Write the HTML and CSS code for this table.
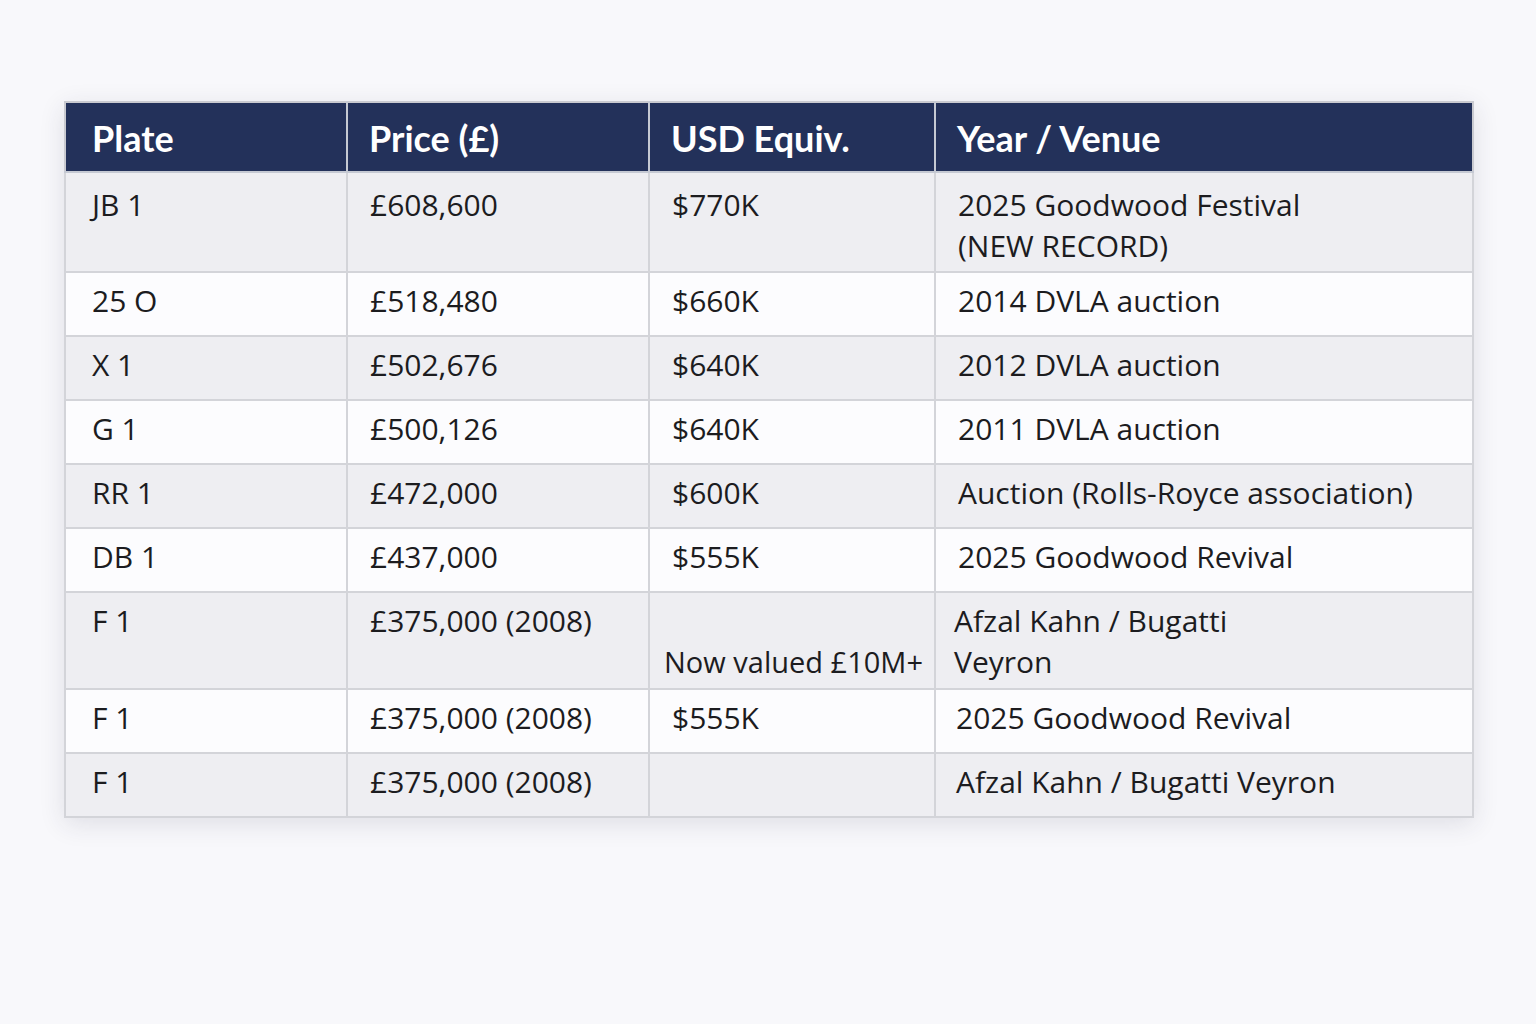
FILE: index.html
```html
<!DOCTYPE html>
<html>
<head>
<meta charset="utf-8">
<link rel="stylesheet" href="styles.css">
</head>
<body>
<div class="page">
<table class="plates">
  <colgroup>
    <col class="c1"><col class="c2"><col class="c3"><col class="c4">
  </colgroup>
  <thead>
    <tr><th>Plate</th><th>Price (£)</th><th>USD Equiv.</th><th>Year / Venue</th></tr>
  </thead>
  <tbody>
    <tr class="alt two"><td>JB 1</td><td>£608,600</td><td>$770K</td><td>2025 Goodwood Festival<br>(NEW RECORD)</td></tr>
    <tr><td>25 O</td><td>£518,480</td><td>$660K</td><td>2014 DVLA auction</td></tr>
    <tr class="alt"><td>X 1</td><td>£502,676</td><td>$640K</td><td>2012 DVLA auction</td></tr>
    <tr><td>G 1</td><td>£500,126</td><td>$640K</td><td>2011 DVLA auction</td></tr>
    <tr class="alt"><td>RR 1</td><td>£472,000</td><td>$600K</td><td>Auction (Rolls-Royce association)</td></tr>
    <tr><td>DB 1</td><td>£437,000</td><td>$555K</td><td>2025 Goodwood Revival</td></tr>
    <tr class="alt tall"><td>F 1</td><td>£375,000 (2008)</td><td class="bottom">Now valued £10M+</td><td class="shift">Afzal Kahn / Bugatti<br>Veyron</td></tr>
    <tr><td>F 1</td><td>£375,000 (2008)</td><td>$555K</td><td class="shift1">2025 Goodwood Revival</td></tr>
    <tr class="alt"><td>F 1</td><td>£375,000 (2008)</td><td></td><td class="shift1">Afzal Kahn / Bugatti Veyron</td></tr>
  </tbody>
</table>
</div>
</body>
</html>
```

FILE: styles.css
```css
html, body {
  margin: 0;
  padding: 0;
}
body {
  width: 1536px;
  height: 1024px;
  background: #f8f8fb;
  font-family: "Open Sans", "Liberation Sans", sans-serif;
  color: #1c1c1f;
  overflow: hidden;
}
.page {
  padding: 101px 0 0 64px;
}
.plates {
  border-collapse: collapse;
  width: 1408px;
  table-layout: fixed;
  border: 2px solid #c9cad0;
  box-shadow: 0 6px 24px rgba(40, 45, 70, 0.12);
}
.c1 { width: 282px; }
.c2 { width: 302px; }
.c3 { width: 286px; }
.c4 { width: 538px; }

th {
  font-family: Lato, "Liberation Sans", sans-serif;
  background: #23315a;
  color: #ffffff;
  font-weight: 700;
  font-size: 36px;
  text-align: left;
  height: 70px;
  padding: 2px 0 0 21px;
  box-sizing: border-box;
  border-left: 2px solid #c5c9d3;
  border-bottom: 2px solid #c5c9d3;
  line-height: 36px;
}
th:first-child {
  border-left: none;
  padding-left: 26px;
}
td {
  font-size: 30px;
  line-height: 41px;
  vertical-align: top;
  padding: 7px 0 14px 22px;
  border: 2px solid #d3d4d9;
  background: #fcfcfe;
  white-space: nowrap;
}
td:first-child {
  padding-left: 26px;
}
tr.alt td {
  background: #eeeef2;
}
tr.two td {
  padding-top: 11px;
  padding-bottom: 5px;
}
tr.tall td {
  padding-top: 7px;
  padding-bottom: 6px;
}
td.bottom {
  font-size: 29px;
  vertical-align: bottom;
  padding-left: 14px;
}
td.shift {
  padding-left: 18px;
}
td.shift1 {
  padding-left: 20px;
}
```
